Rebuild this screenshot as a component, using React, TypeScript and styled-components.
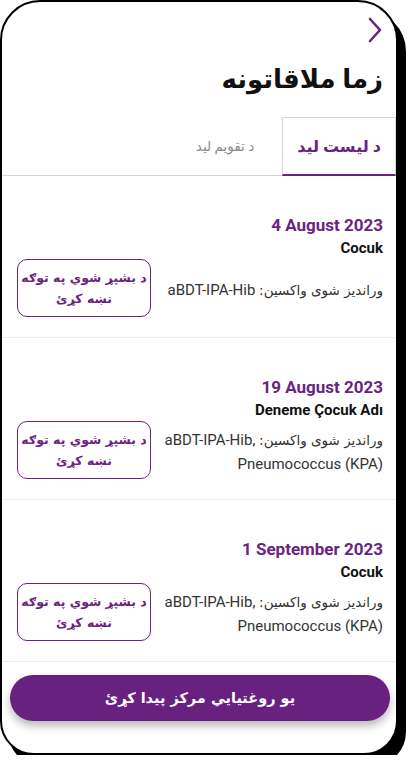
import React from "react";
import styled, { createGlobalStyle } from "styled-components";

const purple = "#6b2382";

const GlobalStyle = createGlobalStyle`
  html, body {
    margin: 0;
    padding: 0;
    background: #fff;
  }
  body {
    font-family: Roboto, "DejaVu Sans", sans-serif;
  }
`;

type Appointment = {
  date: string;
  child: string;
  vaccines: string[];
};

const appointments: Appointment[] = [
  { date: "4 August 2023", child: "Cocuk", vaccines: ["aBDT-IPA-Hib"] },
  { date: "19 August 2023", child: "Deneme Çocuk Adı", vaccines: ["aBDT-IPA-Hib", "Pneumococcus (KPA)"] },
  { date: "1 September 2023", child: "Cocuk", vaccines: ["aBDT-IPA-Hib", "Pneumococcus (KPA)"] },
];

const Frame = styled.div`
  direction: rtl;
  box-sizing: border-box;
  width: 398px;
  height: 755px;
  background: #fff;
  border: 2px solid #000;
  border-radius: 40px 40px 34px 34px;
  box-shadow: 8px 11px 0 0 #000;
  overflow: hidden;
  display: flex;
  flex-direction: column;
`;

const TopBar = styled.div`
  display: flex;
  padding: 15px 13px 0;
  height: 32px;
`;

const BackButton = styled.button`
  border: none;
  background: none;
  padding: 0;
  cursor: pointer;
  display: flex;
`;

const Title = styled.h1`
  margin: 10px 13px 0;
  font-size: 26px;
  line-height: 40px;
  font-weight: 700;
  color: #111;
`;

const Tabs = styled.div`
  display: flex;
  margin-top: 18px;
  border-bottom: 1px solid #d4d4d4;
`;

const Tab = styled.div<{ $active?: boolean }>`
  box-sizing: border-box;
  width: 114px;
  height: 59px;
  display: flex;
  align-items: center;
  justify-content: center;
  font-size: ${(p) => (p.$active ? "16px" : "13.5px")};
  font-weight: ${(p) => (p.$active ? 700 : 400)};
  color: ${(p) => (p.$active ? purple : "#8a8a8a")};
  border: 1px solid ${(p) => (p.$active ? "#d4d4d4" : "transparent")};
  border-bottom: 2px solid ${(p) => (p.$active ? purple : "transparent")};
  margin-bottom: -1px;
`;

const List = styled.div`
  flex: 1;
  overflow: hidden;
`;

const Item = styled.div`
  box-sizing: border-box;
  height: 162px;
  padding: 38px 13px 0 15px;
  border-bottom: 1px solid #ececec;
`;

const DateText = styled.div`
  direction: ltr;
  text-align: right;
  font-family: Roboto, sans-serif;
  font-size: 17px;
  line-height: 22px;
  font-weight: 700;
  color: ${purple};
`;

const ChildName = styled.div`
  font-family: Roboto, sans-serif;
  font-size: 15px;
  line-height: 20px;
  font-weight: 700;
  color: #111;
  margin-top: 2px;
`;

const Row = styled.div`
  display: flex;
  align-items: center;
  justify-content: space-between;
  gap: 6px;
  margin-top: 1px;
`;

const Vaccines = styled.div`
  font-size: 15px;
  line-height: 24px;
  color: #333;
  padding-top: 4px;
`;

const VaccineLabel = styled.span`
  font-family: "DejaVu Sans", sans-serif;
  font-size: 13.5px;
`;

const VaccineName = styled.span`
  white-space: nowrap;
`;

const MarkButton = styled.button`
  box-sizing: border-box;
  flex: 0 0 134px;
  height: 58px;
  border: 1px solid ${purple};
  border-radius: 10px;
  background: #fff;
  color: ${purple};
  font-family: "DejaVu Sans", sans-serif;
  font-size: 12.5px;
  font-weight: 700;
  line-height: 21px;
  padding: 4px 2px;
  direction: rtl;
`;

const Footer = styled.div`
  padding: 12px 6px 32px 8px;
`;

const FindButton = styled.button`
  width: 100%;
  height: 46px;
  border: none;
  border-radius: 23px;
  background: #68217f;
  color: #fff;
  font-family: "DejaVu Sans", sans-serif;
  font-size: 14.5px;
  font-weight: 700;
  direction: rtl;
  box-shadow: 0 5px 8px rgba(0, 0, 0, 0.28);
`;

const ChevronIcon = () => (
  <svg width="16" height="26" viewBox="0 0 16 26" fill="none">
    <path d="M3 2 L13 13 L3 24" stroke={purple} strokeWidth="2.6" strokeLinecap="round" strokeLinejoin="round" />
  </svg>
);

export default function App() {
  return (
    <>
      <GlobalStyle />
      <Frame>
        <TopBar>
          <BackButton aria-label="back">
            <ChevronIcon />
          </BackButton>
        </TopBar>
        <Title>زما ملاقاتونه</Title>
        <Tabs>
          <Tab $active>د لیست لید</Tab>
          <Tab>د تقویم لید</Tab>
        </Tabs>
        <List>
          {appointments.map((a, i) => (
            <Item key={i}>
              <DateText>{a.date}</DateText>
              <ChildName>{a.child}</ChildName>
              <Row>
                <Vaccines>
                  <VaccineLabel>وراندیز شوی واکسین:</VaccineLabel>{" "}
                  {a.vaccines.map((v, j) => (
                    <React.Fragment key={v}>
                      <VaccineName>{v}{j < a.vaccines.length - 1 ? "," : ""}</VaccineName>{" "}
                    </React.Fragment>
                  ))}
                </Vaccines>
                <MarkButton>د بشپړ شوي په توګه نښه کړئ</MarkButton>
              </Row>
            </Item>
          ))}
        </List>
        <Footer>
          <FindButton>یو روغتیایي مرکز پیدا کړئ</FindButton>
        </Footer>
      </Frame>
    </>
  );
}
